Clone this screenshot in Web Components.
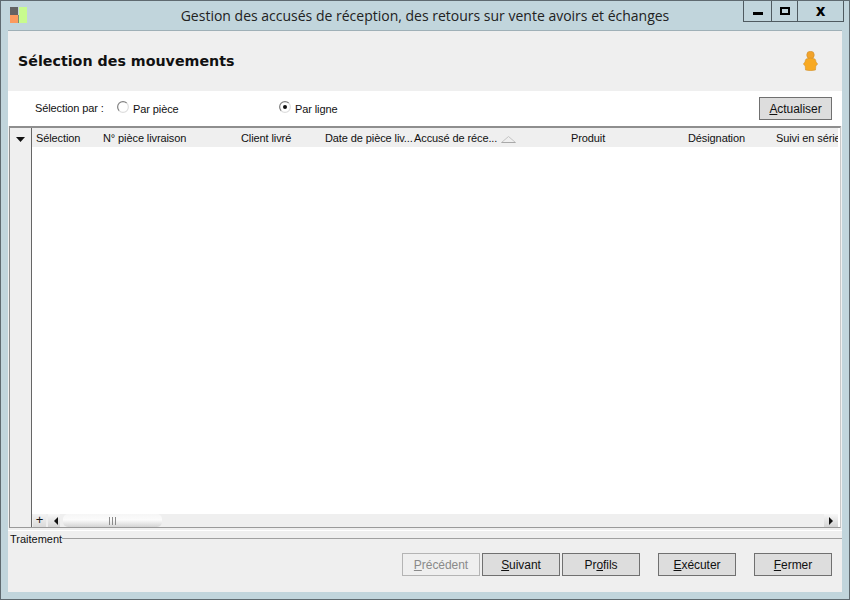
<!DOCTYPE html>
<html lang="fr">
<head>
<meta charset="utf-8">
<title>Gestion des accusés</title>
<style>
  html, body { margin: 0; height: 100%; }
  body { font: 11px "Liberation Sans", Arial, sans-serif; letter-spacing: -0.1px; color: #111; overflow: hidden; }
</style>
</head>
<body>
<app-window>
  <title-bar slot="title">Gestion des accusés de réception, des retours sur vente avoirs et échanges</title-bar>
  <page-header>Sélection des mouvements</page-header>
  <selection-bar></selection-bar>
  <data-grid></data-grid>
  <action-footer></action-footer>
</app-window>

<script>
class AppWindow extends HTMLElement {
  constructor() {
    super();
    this.attachShadow({ mode: 'open' });
    this.shadowRoot.innerHTML = `
      <style>
        :host {
          display: flex;
          flex-direction: column;
          box-sizing: border-box;
          width: 850px;
          height: 600px;
          background: #c1d5dc;
          border: 1px solid #5f6a70;
        }
        #client {
          flex: 1;
          display: flex;
          flex-direction: column;
          min-height: 0;
          margin: 0 7px 7px;
          background: #f0f0f0;
          border-top: 1px solid #9fb0b7;
        }
      </style>
      <slot name="title"></slot>
      <div id="client"><slot></slot></div>
    `;
  }
}

class TitleBar extends HTMLElement {
  constructor() {
    super();
    this.attachShadow({ mode: 'open' });
    this.shadowRoot.innerHTML = `
      <style>
        :host {
          display: flex;
          align-items: flex-start;
          height: 29px;
          font: 14px "Open Sans", "Noto Sans", sans-serif;
          letter-spacing: 0;
          color: #222;
        }
        #logo { margin: 6px 0 0 9px; flex: none; }
        #text {
          flex: none;
          width: 796px;
          margin: 5px -80px 0 0;
          text-align: center;
          white-space: nowrap;
        }
        #caption {
          display: flex;
          box-sizing: border-box;
          height: 21px;
          border: 1px solid #4f5a60;
          border-top: 0;
        }
        #caption span {
          display: flex;
          align-items: center;
          justify-content: center;
          box-sizing: border-box;
          height: 20px;
          border-right: 1px solid #4f5a60;
        }
        #caption span:last-child { border-right: 0; }
        #min { width: 28px; }
        #max { width: 26px; }
        #close { width: 45px; font: bold 15px/18px "DejaVu Sans", sans-serif; color: #000; }
      </style>
      <svg id="logo" width="17" height="17" viewBox="0 0 17 17">
        <rect x="0" y="0" width="8" height="8" fill="#636363"/>
        <rect x="0" y="8" width="8" height="8" fill="#fb9a5e"/>
        <rect x="8" y="8" width="1" height="8" fill="#7d8b70"/>
        <rect x="9" y="0" width="8" height="16" fill="#c8fb8e"/>
      </svg>
      <div id="text"><slot></slot></div>
      <div id="caption">
        <span id="min"><svg width="10" height="10"><rect width="10" height="3" y="6" fill="#000"/></svg></span>
        <span id="max"><svg width="10" height="8"><rect x="1" y="1" width="8" height="6" fill="none" stroke="#000" stroke-width="2"/></svg></span>
        <span id="close">x</span>
      </div>
    `;
  }
}

class PageHeader extends HTMLElement {
  constructor() {
    super();
    this.attachShadow({ mode: 'open' });
    this.shadowRoot.innerHTML = `
      <style>
        :host {
          display: flex;
          align-items: center;
          justify-content: space-between;
          height: 60px;
          flex: none;
          padding: 0 24px 0 10px;
          background: #efefef;
          font: bold 14.25px "DejaVu Sans", Verdana, sans-serif;
          letter-spacing: 0;
          color: #111;
        }
      </style>
      <slot></slot>
      <svg width="15" height="20" viewBox="0 0 15 20">
        <circle cx="7.5" cy="4" r="3.8" fill="#f2a32a" stroke="#c98a2a" stroke-width="0.5"/>
        <path d="M3 8 Q7.5 6 12 8 Q13 9.5 13 11 L14.7 13 L12.8 15 L12.5 19 Q7.5 20.4 2.5 19 L2.2 15 L0.3 13 L2 11 Q2 9.5 3 8 Z" fill="#f8a922" stroke="#c98a2a" stroke-width="0.5"/>
      </svg>
    `;
  }
}

class RadioOption extends HTMLElement {
  constructor() {
    super();
    this.attachShadow({ mode: 'open' });
    const dot = this.hasAttribute('checked') ? '<circle cx="6" cy="6" r="2" fill="#111"/>' : '';
    this.shadowRoot.innerHTML = `
      <style>
        :host { display: inline-flex; align-items: center; gap: 4px; }
        svg { flex: none; margin-top: -3px; }
      </style>
      <svg width="12" height="12" viewBox="0 0 12 12">
        <path d="M2.2 9.8 A5.2 5.2 0 0 1 9.8 2.2" fill="none" stroke="#808080" stroke-width="1.2"/>
        <path d="M9.8 2.2 A5.2 5.2 0 0 1 2.2 9.8" fill="none" stroke="#dedede" stroke-width="1.2"/>
        ${dot}
      </svg>
      <span><slot></slot></span>
    `;
  }
}

class WinButton extends HTMLElement {
  constructor() {
    super();
    this.attachShadow({ mode: 'open' });
    this.shadowRoot.innerHTML = `
      <style>
        :host {
          display: inline-flex;
          align-items: center;
          justify-content: center;
          box-sizing: border-box;
          width: 78px;
          height: 23px;
          background: #dddddd;
          border: 1px solid #707070;
          font: 12px "Liberation Sans", Arial, sans-serif;
          letter-spacing: -0.05px;
          color: #111;
        }
        :host([disabled]) {
          background: #efefef;
          border-color: #b4b4b4;
          color: #8a8a8a;
        }
      </style>
      <slot></slot>
    `;
  }
}

class SelectionBar extends HTMLElement {
  constructor() {
    super();
    this.attachShadow({ mode: 'open' });
    this.shadowRoot.innerHTML = `
      <style>
        :host {
          display: grid;
          grid-template-columns: 82px 162px 1fr auto;
          align-items: center;
          flex: none;
          box-sizing: border-box;
          height: 35px;
          padding: 0 10px 0 27px;
          background: #fff;
        }
        #by { margin-top: -2px; }
      </style>
      <span id="by">Sélection par :</span>
      <radio-option>Par pièce</radio-option>
      <radio-option checked>Par ligne</radio-option>
      <win-button style="width:73px"><span><u>A</u>ctualiser</span></win-button>
    `;
  }
}

class GridScrollbar extends HTMLElement {
  constructor() {
    super();
    this.attachShadow({ mode: 'open' });
    this.shadowRoot.innerHTML = `
      <style>
        :host {
          display: flex;
          align-items: stretch;
          height: 13px;
          flex: none;
          background: #efefef;
        }
        #add {
          flex: none;
          width: 13px;
          margin: 0 2px 0 1px;
          text-align: center;
          font: 13px/12px "Liberation Sans", sans-serif;
          background: linear-gradient(#f4f4f4, #dadada);
        }
        .arrow {
          flex: none;
          display: flex;
          align-items: center;
          justify-content: center;
          width: 12px;
          background: linear-gradient(#f8f8f8, #d4d4d4);
        }
        #left svg { margin-left: 4px; }
        #track { flex: 1; padding-left: 3px; }
        #thumb {
          display: flex;
          align-items: center;
          justify-content: center;
          gap: 2px;
          width: 99px;
          height: 13px;
          box-sizing: border-box;
          border-radius: 5px;
          background: linear-gradient(#f6f6f6, #fbfbfb 45%, #d4d4d4);
        }
        #thumb i { width: 1px; height: 8px; background: #8a8a8a; }
        #right { width: 14px; }
      </style>
      <div id="add">+</div>
      <div class="arrow" id="left"><svg width="4" height="8"><path d="M4 0 V8 L0 4 Z" fill="#111"/></svg></div>
      <div id="track"><div id="thumb"><i></i><i></i><i></i></div></div>
      <div class="arrow" id="right"><svg width="4" height="8"><path d="M0 0 V8 L4 4 Z" fill="#111"/></svg></div>
    `;
  }
}

class DataGrid extends HTMLElement {
  constructor() {
    super();
    this.attachShadow({ mode: 'open' });
    const cols = [
      ['Sélection', 67], ['N° pièce livraison', 138], ['Client livré', 84],
      ['Date de pièce liv...', 89], ['Accusé de réce...', 157], ['Produit', 117],
      ['Désignation', 88], ['Suivi en série', 80]
    ];
    const head = cols.map(([label, w]) => `<span class="col" style="width:${w}px">${label}</span>`).join('');
    this.shadowRoot.innerHTML = `
      <style>
        :host {
          display: flex;
          flex: none;
          box-sizing: border-box;
          height: 402px;
          margin: 0 1px;
          padding-right: 2px;
          background: #fff;
          border-top: 2px solid #8e8e8e;
          border-left: 1px solid #8e8e8e;
          border-right: 1px solid #c8c8c8;
          border-bottom: 1px solid #9a9a9a;
        }
        #side {
          flex: none;
          box-sizing: border-box;
          width: 22px;
          display: flex;
          justify-content: center;
          padding-top: 9px;
          background: #efefef;
          border-right: 1px solid #666;
        }
        #cells {
          flex: 1;
          min-width: 0;
          display: flex;
          flex-direction: column;
          justify-content: space-between;
        }
        #head {
          display: flex;
          height: 19px;
          background: #efefef;
          overflow: hidden;
          white-space: nowrap;
        }
        .col {
          flex: none;
          box-sizing: border-box;
          padding-left: 4px;
          line-height: 20px;
          position: relative;
        }
        svg.sort { position: absolute; left: 91px; top: 8px; }
      </style>
      <div id="side"><svg width="9" height="5"><path d="M0 0 H9 L4.5 5 Z" fill="#111"/></svg></div>
      <div id="cells">
        <div id="head">${head}</div>
        <grid-scrollbar></grid-scrollbar>
      </div>
    `;
    this.shadowRoot.querySelectorAll('.col')[4].insertAdjacentHTML('beforeend',
      '<svg class="sort" width="15" height="7"><path d="M0.5 6.5 L7.5 0.5 L14.5 6.5" fill="none" stroke="#c4c4c4"/><path d="M0.5 6.5 H14.5" stroke="#a8a8a8"/></svg>');
  }
}

class ActionFooter extends HTMLElement {
  constructor() {
    super();
    this.attachShadow({ mode: 'open' });
    this.shadowRoot.innerHTML = `
      <style>
        :host {
          display: block;
          flex: 1;
          box-sizing: border-box;
          padding-top: 2px;
          background: #efefef;
        }
        #rule { height: 1px; background: #fff; }
        #legend { display: flex; align-items: center; height: 14px; padding-left: 2px; letter-spacing: 0; }
        #legend span { margin-top: 1px; }
        #legend i { flex: 1; height: 1px; background: #a0a0a0; }
        #actions {
          display: flex;
          justify-content: flex-end;
          gap: 2px;
          padding: 8px 10px 0 0;
        }
        .gap { margin-left: 16px; }
      </style>
      <div id="rule"></div>
      <div id="legend"><span>Traitement</span><i></i></div>
      <div id="actions">
        <win-button disabled><span><u>P</u>récédent</span></win-button>
        <win-button><span><u>S</u>uivant</span></win-button>
        <win-button><span>Pr<u>o</u>fils</span></win-button>
        <win-button class="gap"><span><u>E</u>xécuter</span></win-button>
        <win-button class="gap"><span><u>F</u>ermer</span></win-button>
      </div>
    `;
  }
}

customElements.define('app-window', AppWindow);
customElements.define('title-bar', TitleBar);
customElements.define('page-header', PageHeader);
customElements.define('radio-option', RadioOption);
customElements.define('win-button', WinButton);
customElements.define('selection-bar', SelectionBar);
customElements.define('grid-scrollbar', GridScrollbar);
customElements.define('data-grid', DataGrid);
customElements.define('action-footer', ActionFooter);
</script>
</body>
</html>
